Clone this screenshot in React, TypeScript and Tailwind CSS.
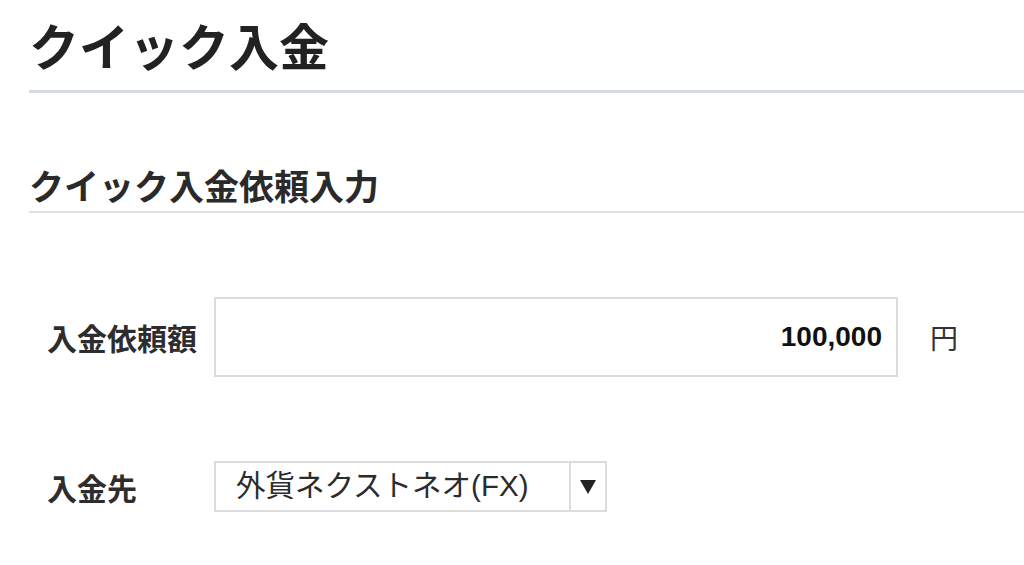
// クイック入金 - 入力画面

const jp = 'font-["Noto_Sans_CJK_JP",sans-serif]';
const latin = 'font-["Liberation_Sans","Noto_Sans_CJK_JP",sans-serif]';

export default function App() {
  return (
    <div className={`w-[1024px] h-[565px] bg-white overflow-hidden text-[#222] ${jp}`}>
      {/* Page title */}
      <div className="pl-[29px]">
        <div className="h-[90px] flex items-center">
          <h1 className="text-[50px] leading-none font-bold tracking-normal -mt-[2px]">クイック入金</h1>
        </div>
        <div className="h-[3px] bg-[#d5dbe1]" />
      </div>

      {/* Section title */}
      <div className="pl-[29px] pt-[65px]">
        <div className="h-[53px] flex items-center">
          <h2 className="text-[35px] leading-none font-bold text-[#2a2a2a]">クイック入金依頼入力</h2>
        </div>
        <div className="h-[2px] bg-[#dde1e2]" />
      </div>

      {/* Amount */}
      <div className="mt-[84px] flex items-center">
        <label className="w-[214px] pl-[47px] text-[30px] font-bold text-[#2d2d2d] leading-none">
          入金依頼額
        </label>
        <div className="w-[684px] h-[80px] border-2 border-[#dcdcdc] flex items-center justify-end pr-[14px]">
          <span className={`${latin} text-[28px] font-bold text-[#111]`}>100,000</span>
        </div>
        <span className="ml-[32px] text-[28px] text-[#333] leading-none">円</span>
      </div>

      {/* Destination */}
      <div className="mt-[84px] flex items-center">
        <label className="w-[214px] pl-[47px] text-[30px] font-bold text-[#2d2d2d] leading-none">
          入金先
        </label>
        <div className="w-[393px] h-[51px] border-2 border-[#dcdcdc] flex items-stretch">
          <div className={`flex-1 flex items-center pl-[20px] text-[29.5px] text-[#2b2b2b] ${latin}`}>
            外貨ネクストネオ(FX)
          </div>
          <div className="w-[36px] border-l-2 border-[#dcdcdc] flex items-center justify-center">
            <svg width="16" height="15" viewBox="0 0 16 15">
              <polygon points="0,1 16,1 8,15" fill="#222" />
            </svg>
          </div>
        </div>
      </div>
    </div>
  );
}
